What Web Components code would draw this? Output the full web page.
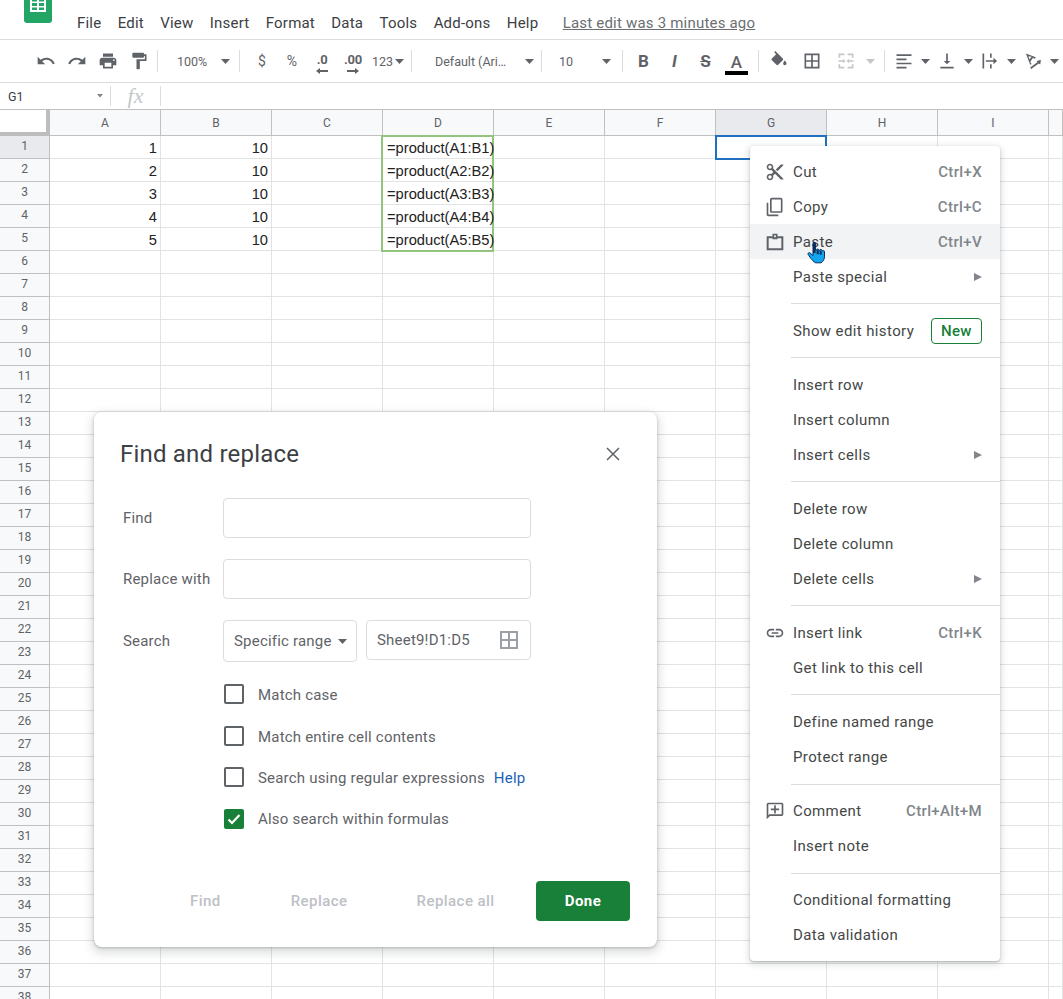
<!DOCTYPE html>
<html>
<head>
<meta charset="utf-8">
<title>Find and replace</title>
<style>
  html, body { margin: 0; padding: 0; background: #fff; }
  body { font-family: Roboto, "Liberation Sans", sans-serif; }
</style>
</head>
<body>

<sheet-app>
  <menu-bar></menu-bar>
  <tool-bar></tool-bar>
  <formula-bar></formula-bar>
  <sheet-grid></sheet-grid>
  <find-dialog></find-dialog>
  <context-menu>
    <menu-item icon="cut" shortcut="Ctrl+X">Cut</menu-item>
    <menu-item icon="copy" shortcut="Ctrl+C">Copy</menu-item>
    <menu-item icon="paste" shortcut="Ctrl+V" hover>Paste</menu-item>
    <menu-item arrow>Paste special</menu-item>
    <menu-sep></menu-sep>
    <menu-item badge="New">Show edit history</menu-item>
    <menu-sep></menu-sep>
    <menu-item>Insert row</menu-item>
    <menu-item>Insert column</menu-item>
    <menu-item arrow>Insert cells</menu-item>
    <menu-sep></menu-sep>
    <menu-item>Delete row</menu-item>
    <menu-item>Delete column</menu-item>
    <menu-item arrow>Delete cells</menu-item>
    <menu-sep></menu-sep>
    <menu-item icon="link" shortcut="Ctrl+K">Insert link</menu-item>
    <menu-item>Get link to this cell</menu-item>
    <menu-sep></menu-sep>
    <menu-item>Define named range</menu-item>
    <menu-item>Protect range</menu-item>
    <menu-sep></menu-sep>
    <menu-item icon="comment" shortcut="Ctrl+Alt+M">Comment</menu-item>
    <menu-item>Insert note</menu-item>
    <menu-sep></menu-sep>
    <menu-item>Conditional formatting</menu-item>
    <menu-item>Data validation</menu-item>
  </context-menu>
</sheet-app>

<script>
// Icon paths, all on a 24 box
const ICONS = {
  undo: '<path d="M12.5 8c-2.65 0-5.05.99-6.9 2.6L2 7v9h9l-3.62-3.62c1.39-1.16 3.16-1.88 5.12-1.88 3.54 0 6.55 2.31 7.6 5.5l2.37-.78C21.08 11.03 17.15 8 12.5 8z"/>',
  redo: '<path d="M18.4 10.6C16.55 8.99 14.15 8 11.5 8c-4.65 0-8.58 3.03-9.96 7.22L3.9 16c1.05-3.19 4.05-5.5 7.6-5.5 1.95 0 3.73.72 5.12 1.88L13 16h9V7l-3.6 3.6z"/>',
  print: '<path d="M19 8H5c-1.66 0-3 1.34-3 3v6h4v4h12v-4h4v-6c0-1.66-1.34-3-3-3zm-3 11H8v-5h8v5zm3-7c-.55 0-1-.45-1-1s.45-1 1-1 1 .45 1 1-.45 1-1 1zm-1-9H6v4h12V3z"/>',
  paint: '<path d="M18 4V3c0-.55-.45-1-1-1H5c-.55 0-1 .45-1 1v4c0 .55.45 1 1 1h12c.55 0 1-.45 1-1V6h1v4H9v11c0 .55.45 1 1 1h2c.55 0 1-.45 1-1v-9h8V4h-3z"/>',
  fill: '<path d="M16.56 8.94L7.62 0 6.21 1.41l2.38 2.38-5.15 5.15c-.59.59-.59 1.54 0 2.12l5.5 5.5c.29.29.68.44 1.06.44s.77-.15 1.06-.44l5.5-5.5c.59-.58.59-1.53 0-2.12zM19 11.5s-2 2.17-2 3.5c0 1.1.9 2 2 2s2-.9 2-2c0-1.33-2-3.5-2-3.5z"/>',
  borders: '<path d="M3 3v18h18V3H3zm8 16H5v-6h6v6zm0-8H5V5h6v6zm8 8h-6v-6h6v6zm0-8h-6V5h6v6z"/>',
  merge: '<path fill="#c4c7ca" d="M3 3h7v2H5v3H3zM14 3h7v5h-2V5h-5zM3 16h2v3h5v2H3zM19 16h2v5h-7v-2h5zM3 11h5.5V9.2l2.8 2.8-2.8 2.8V13H3zM21 11h-5.5V9.2L12.7 12l2.8 2.8V13H21z"/>',
  alignleft: '<path d="M3 4h18v2H3zM3 9h12v2H3zM3 14h18v2H3zM3 19h12v2H3z"/>',
  valign: '<path d="M16 12h-3V3h-2v9H8l4 4 4-4zM4 19v2h16v-2H4z"/>',
  wrap: '<path d="M3 3h2v18H3zM12 3h2v5h-2zM12 16h2v5h-2zM7 11h9.2V8l4.3 4-4.3 4v-3H7z"/>',
  rotate: '<path d="M3.5 3l11.8 4.5-1 1.8-2.6-1-3 5 1.6 2.2-1.7 1L3.5 3zM6.5 6.3l1.3 3.9 2.5-3.2-3.8-.7zM21.5 10.5l-.8 5.7-1.8-1.1L9.8 21.5l-1.2-1.7 9-6.5-1.6-1 5.5-1.8z"/>',
  cut: '<path d="M9.64 7.64c.23-.5.36-1.05.36-1.64 0-2.21-1.79-4-4-4S2 3.79 2 6s1.79 4 4 4c.59 0 1.14-.13 1.64-.36L10 12l-2.36 2.36C7.14 14.13 6.59 14 6 14c-2.21 0-4 1.79-4 4s1.79 4 4 4 4-1.79 4-4c0-.59-.13-1.14-.36-1.64L12 14l7 7h3v-1L9.64 7.64zM6 8c-1.1 0-2-.89-2-2s.9-2 2-2 2 .89 2 2-.9 2-2 2zm0 12c-1.1 0-2-.89-2-2s.9-2 2-2 2 .89 2 2-.9 2-2 2zM19 3l-6 6 2 2 7-7V3z"/>',
  copy: '<path d="M16 1H4c-1.1 0-2 .9-2 2v14h2V3h12V1zm3 4H8c-1.1 0-2 .9-2 2v14c0 1.1.9 2 2 2h11c1.1 0 2-.9 2-2V7c0-1.1-.9-2-2-2zm0 16H8V7h11v14z" transform="matrix(1 0 0 -1 0 24)"/>',
  paste: '<path d="M2 5h7V2h6v3h7v17H2V5zm2.4 2.4v12.2h15.2V7.4H15v1.4H9V7.4H4.4zM11 4v2.4h2V4h-2z"/>',
  link: '<path d="M3.9 12c0-1.71 1.39-3.1 3.1-3.1h4V7H7c-2.76 0-5 2.24-5 5s2.24 5 5 5h4v-1.9H7c-1.71 0-3.1-1.39-3.1-3.1zM8 13h8v-2H8v2zm9-6h-4v1.9h4c1.71 0 3.1 1.39 3.1 3.1s-1.39 3.1-3.1 3.1h-4V17h4c2.76 0 5-2.24 5-5s-2.24-5-5-5z"/>',
  comment: '<path transform="matrix(-1 0 0 1 24 0)" d="M22 4c0-1.1-.9-2-2-2H4c-1.1 0-2 .9-2 2v12c0 1.1.9 2 2 2h14l4 4V4zm-2 13.17L18.83 16H4V4h16v13.17zM13 5h-2v4H7v2h4v4h2v-4h4V9h-4z"/>'
};

function icon(name, size, color) {
  return `<svg width="${size}" height="${size}" viewBox="0 0 24 24" fill="${color || '#5f6368'}">${ICONS[name]}</svg>`;
}

const caret = (color, w) => `<svg width="${w || 9}" height="${(w || 9) / 2 + .5}" viewBox="0 0 9 5"><path d="M0 0h9L4.5 5z" fill="${color || '#5f6368'}"/></svg>`;

// Whole page frame
class SheetApp extends HTMLElement {
  constructor() {
    super();
    this.attachShadow({ mode: 'open' });
    this.shadowRoot.innerHTML = `
      <style>
        :host { display: flex; flex-direction: column; position: relative; width: 1063px; height: 999px; overflow: hidden; background: #fff; }
      </style>
      <slot></slot>`;
  }
}

class MenuBar extends HTMLElement {
  constructor() {
    super();
    this.attachShadow({ mode: 'open' });
    const items = ['File', 'Edit', 'View', 'Insert', 'Format', 'Data', 'Tools', 'Add-ons', 'Help'];
    this.shadowRoot.innerHTML = `
      <style>
        :host { display: flex; flex: none; height: 39px; border-bottom: 1px solid #dadce0; font: 15px Roboto, sans-serif; letter-spacing: .2px; color: #3c4043; overflow: hidden; }
        .logo { flex: none; margin: -17px 25px 0 24px; width: 28px; height: 40px; }
        nav { display: flex; gap: 16.35px; padding-top: 14px; }
        a { text-decoration: underline; color: #6b6f73; margin-left: 8px; }
      </style>
      <svg class="logo" viewBox="0 0 28 40">
        <path d="M0 0h28v37a3 3 0 0 1-3 3H3a3 3 0 0 1-3-3z" fill="#23a566"/>
        <path d="M6 16h16v13H6z" fill="#fff"/>
        <path d="M8 18.5h5v-2H8zM15 18.5h5v-2h-5zM8 23h5v-3H8zM15 23h5v-3h-5zM8 27h5v-2.5H8zM15 27h5v-2.5h-5z" fill="#23a566"/>
      </svg>
      <nav>${items.map(i => `<span>${i}</span>`).join('')}<a>Last edit was 3 minutes ago</a></nav>`;
  }
}

// One toolbar slot with a fixed width; holds an icon or a short text, maybe a caret
class ToolBtn extends HTMLElement {
  constructor() {
    super();
    this.attachShadow({ mode: 'open' });
  }
  connectedCallback() {
    const w = this.getAttribute('w');
    const name = this.getAttribute('icon');
    const gap = this.getAttribute('gap');
    const hasCaret = this.hasAttribute('caret');
    const size = this.getAttribute('size') || 18;
    this.shadowRoot.innerHTML = `
      <style>
        :host { display: flex; flex: none; align-items: center; justify-content: ${this.getAttribute('align') || 'center'}; width: ${w}px; height: 100%; box-sizing: border-box; padding-left: ${this.getAttribute('pl') || 0}px; color: #5f6368; font: 12.5px Roboto, sans-serif; gap: ${gap || 0}px; white-space: nowrap; }
        .caret { display: flex; }
      </style>
      ${name ? icon(name, size) : ''}<slot></slot>${hasCaret ? `<span class="caret">${caret(this.getAttribute('caret-color'))}</span>` : ''}`;
  }
}

class ToolSep extends HTMLElement {
  constructor() {
    super();
    this.attachShadow({ mode: 'open' });
    this.shadowRoot.innerHTML = `
      <style>
        :host { display: flex; flex: none; align-items: center; justify-content: center; height: 100%; }
        i { display: block; width: 1px; height: 22px; background: #dadce0; }
      </style><i></i>`;
  }
  connectedCallback() {
    this.style.width = this.getAttribute('w') + 'px';
  }
}

class ToolBar extends HTMLElement {
  constructor() {
    super();
    this.attachShadow({ mode: 'open' });
    this.shadowRoot.innerHTML = `
      <style>
        :host { display: flex; flex: none; height: 42px; padding-left: 31px; border-bottom: 1px solid #dadce0; overflow: hidden; }
        .b { font: 700 17px Roboto, sans-serif; }
        .i { font: italic 700 17px Roboto, sans-serif; }
        .s { font: 700 17px Roboto, sans-serif; text-decoration: line-through; }
        .a { display: flex; flex-direction: column; align-items: center; padding-top: 6px; font: 500 17px/16px Roboto, sans-serif; }
        .a u { display: block; width: 23px; height: 4px; background: #000; margin-top: 1px; }
        .dec { display: flex; flex-direction: column; align-items: center; padding-top: 6px; font: 700 13px/12px Roboto, sans-serif; letter-spacing: -.3px; }
        .dec svg { display: block; margin-top: 2px; }
        .sym { font-size: 14px; }
      </style>
      <tool-btn w="30" icon="undo" size="20"></tool-btn>
      <tool-btn w="31" icon="redo" size="20"></tool-btn>
      <tool-btn w="31" icon="print" size="20"></tool-btn>
      <tool-btn w="32" icon="paint" size="20"></tool-btn>
      <tool-sep w="4"></tool-sep>
      <tool-btn w="79" align="flex-start" pl="18" gap="14" caret>100%</tool-btn>
      <tool-sep w="2"></tool-sep>
      <tool-btn w="7"></tool-btn>
      <tool-btn w="30"><span class="sym">$</span></tool-btn>
      <tool-btn w="30"><span class="sym">%</span></tool-btn>
      <tool-btn w="30"><span class="dec">.0<svg width="12" height="6" viewBox="0 0 12 6"><path d="M0 3l4-3v2h8v2H4v2z" fill="#5f6368"/></svg></span></tool-btn>
      <tool-btn w="32"><span class="dec">.00<svg width="12" height="6" viewBox="0 0 12 6"><path d="M12 3L8 0v2H0v2h8v2z" fill="#5f6368"/></svg></span></tool-btn>
      <tool-btn w="40" align="flex-start" pl="3" gap="2" caret>123</tool-btn>
      <tool-sep w="4"></tool-sep>
      <tool-btn w="127" align="flex-start" pl="22" gap="19" caret>Default (Ari…</tool-btn>
      <tool-sep w="2"></tool-sep>
      <tool-btn w="79" align="flex-start" pl="17" gap="29" caret>10</tool-btn>
      <tool-sep w="2"></tool-sep>
      <tool-btn w="5"></tool-btn>
      <tool-btn w="31"><span class="b">B</span></tool-btn>
      <tool-btn w="31"><span class="i">I</span></tool-btn>
      <tool-btn w="31"><span class="s">S</span></tool-btn>
      <tool-btn w="31"><span class="a">A<u></u></span></tool-btn>
      <tool-sep w="12"></tool-sep>
      <tool-btn w="30" icon="fill" size="20"></tool-btn>
      <tool-btn w="36" icon="borders" size="20"></tool-btn>
      <tool-btn w="32" icon="merge" size="20"></tool-btn>
      <tool-btn w="16" caret caret-color="#c4c7ca"></tool-btn>
      <tool-sep w="12"></tool-sep>
      <tool-btn w="28" icon="alignleft" size="20"></tool-btn>
      <tool-btn w="15" caret></tool-btn>
      <tool-btn w="28" icon="valign" size="20"></tool-btn>
      <tool-btn w="15" caret></tool-btn>
      <tool-btn w="28" icon="wrap" size="20"></tool-btn>
      <tool-btn w="15" caret></tool-btn>
      <tool-btn w="28" icon="rotate" size="20"></tool-btn>
      <tool-btn w="15" caret></tool-btn>`;
  }
}

class FormulaBar extends HTMLElement {
  constructor() {
    super();
    this.attachShadow({ mode: 'open' });
    this.shadowRoot.innerHTML = `
      <style>
        :host { display: flex; flex: none; align-items: center; height: 26px; border-bottom: 1px solid #c0c0c0; font: 12.5px Roboto, sans-serif; color: #3c4043; }
        .name { display: flex; align-items: center; justify-content: space-between; width: 110px; padding: 0 7px 0 8px; box-sizing: border-box; height: 22px; }
        .line { width: 1px; height: 20px; background: #dadce0; }
        .fx { width: 49px; text-align: center; font: italic 22px "Liberation Serif", serif; color: #c4c7ca; }
      </style>
      <div class="name"><span>G1</span>${caret('#80868b', 6)}</div>
      <div class="line"></div>
      <div class="fx">fx</div>
      <div class="line"></div>`;
  }
}

// Column and row headers, cells, and the two selection boxes laid on the same grid
class SheetGrid extends HTMLElement {
  constructor() {
    super();
    this.attachShadow({ mode: 'open' });
  }
  connectedCallback() {
    const cols = 'ABCDEFGHI'.split('');
    const at = (r, c) => `style="grid-row:${r};grid-column:${c}"`;
    let html = `<div class="corner" ${at(1, 1)}></div>`;
    cols.forEach((c, i) => {
      html += `<div class="head ${c === 'G' ? 'on' : ''}" ${at(1, i + 2)}>${c}</div>`;
    });
    html += `<div class="head" ${at(1, 11)}></div>`;
    for (let r = 1; r <= 38; r++) {
      html += `<div class="rowh ${r === 1 ? 'on' : ''}" ${at(r + 1, 1)}>${r}</div>`;
      cols.forEach((c, i) => {
        let text = '';
        let cls = 'cell';
        if (r <= 5) {
          if (c === 'A') { text = r; cls += ' num'; }
          if (c === 'B') { text = 10; cls += ' num'; }
          if (c === 'D') { text = `=product(A${r}:B${r})`; cls += ' formula'; }
        }
        html += `<div class="${cls}" ${at(r + 1, i + 2)}>${text}</div>`;
      });
      html += `<div class="cell" ${at(r + 1, 11)}></div>`;
    }
    this.shadowRoot.innerHTML = `
      <style>
        :host { display: grid; flex: none; grid-template-columns: 50px repeat(9, 111px) 14px; grid-template-rows: 26px repeat(38, 23px); width: 1063px; box-sizing: border-box; font: 12px Roboto, sans-serif; color: #5f6368; }
        div { box-sizing: border-box; }
        .corner { background: #fff; border-right: 4px solid #bdbdbd; border-bottom: 4px solid #bdbdbd; }
        .head { display: flex; align-items: center; justify-content: center; background: #f8f9fa; border-right: 1px solid #c0c0c0; border-bottom: 1px solid #c0c0c0; padding-top: 1px; }
        .rowh { display: flex; align-items: center; justify-content: center; background: #f8f9fa; border-right: 1px solid #c0c0c0; border-bottom: 1px solid #c0c0c0; padding-bottom: 2px; }
        .on { background: #e8eaed; }
        .cell { border-right: 1px solid #e2e3e3; border-bottom: 1px solid #e2e3e3; font: 14.7px/23px "Liberation Sans", sans-serif; color: #222; padding: 1px 0 0 4px; white-space: nowrap; }
        .num { text-align: right; padding: 1px 3px 0 0; }
        .formula { z-index: 2; border-color: transparent; }
        .green { grid-row: 2 / 7; grid-column: 5; border: 2px solid #93c47d; margin: -1px 0 -1px -2px; z-index: 1; }
        .blue { grid-row: 2; grid-column: 8; border: 2px solid #1f70c1; margin: -1px 0 -1px -1px; z-index: 1; }
        .rule { grid-column: 5; border-bottom: 1px solid #e2e3e3; }
      </style>
      ${html}
      <div class="rule" style="grid-row:2"></div>
      <div class="rule" style="grid-row:3"></div>
      <div class="rule" style="grid-row:4"></div>
      <div class="rule" style="grid-row:5"></div>
      <div class="green"></div>
      <div class="blue"></div>`;
  }
}

class MenuSep extends HTMLElement {
  constructor() {
    super();
    this.attachShadow({ mode: 'open' });
    this.shadowRoot.innerHTML = `
      <style>
        :host { display: block; padding: 9.05px 0 9.05px 41px; }
        i { display: block; height: 1px; background: #dadce0; }
      </style><i></i>`;
  }
}

class MenuItem extends HTMLElement {
  constructor() {
    super();
    this.attachShadow({ mode: 'open' });
  }
  connectedCallback() {
    const name = this.getAttribute('icon');
    const shortcut = this.getAttribute('shortcut');
    const badge = this.getAttribute('badge');
    this.shadowRoot.innerHTML = `
      <style>
        :host { display: flex; align-items: center; height: 35px; padding: 0 18px 0 13px; font: 15px Roboto, sans-serif; letter-spacing: .38px; color: #444746; background: ${this.hasAttribute('hover') ? '#f1f3f4' : 'transparent'}; }
        .ic { display: flex; justify-content: center; width: 24px; margin-right: 6px; }
        .label { flex: 1; }
        .key { color: #80868b; font-weight: 500; letter-spacing: .35px; }
        .arrow { width: 0; height: 0; border-left: 8px solid #80868b; border-top: 4px solid transparent; border-bottom: 4px solid transparent; }
        .badge { border: 1px solid #188038; border-radius: 4px; color: #188038; font-weight: 500; padding: 4px 9.5px 3px; line-height: 17px; letter-spacing: .2px; }
      </style>
      <span class="ic">${name ? icon(name, 20) : ''}</span>
      <span class="label"><slot></slot></span>
      ${shortcut ? `<span class="key">${shortcut}</span>` : ''}
      ${this.hasAttribute('arrow') ? '<span class="arrow"></span>' : ''}
      ${badge ? `<span class="badge">${badge}</span>` : ''}`;
  }
}

class ContextMenu extends HTMLElement {
  constructor() {
    super();
    this.attachShadow({ mode: 'open' });
    this.shadowRoot.innerHTML = `
      <style>
        :host { display: block; position: absolute; left: 750px; top: 146px; width: 250px; height: 815px; box-sizing: border-box; padding-top: 8px; background: #fff; border-radius: 4px; box-shadow: 0 2px 6px 2px rgba(60,64,67,.15), 0 1px 2px rgba(60,64,67,.3); z-index: 5; }
        .hand { position: absolute; left: 57px; top: 95px; }
      </style>
      <slot></slot>
      <svg class="hand" width="18" height="24" viewBox="0 0 18 24">
        <path d="M6 2.5c0-1.6 2.6-1.6 2.6 0V9l1 .1c0-1.4 2.2-1.4 2.2 0l.9.2c.1-1.2 2.1-1.2 2.2.1l.9.5c.5-.7 1.7-.3 1.7.7v5.2c0 2.5-1.4 4.8-3.5 6H8.7C6.6 21.3 3 16.5 1.2 13.5c-.8-1.3.8-2.5 2-1.4L6 14.5z" fill="#12a5f0" stroke="#0b2c5c" stroke-width="1"/>
        <path d="M6 2.5c0-1.6 2.6-1.6 2.6 0V12H6zM9.7 9.3h2v4h-2zM12.7 9.7h2v4h-2z" fill="#0b2c5c"/>
      </svg>`;
  }
}

class CheckRow extends HTMLElement {
  constructor() {
    super();
    this.attachShadow({ mode: 'open' });
    this.shadowRoot.innerHTML = `
      <style>
        :host { display: flex; align-items: center; gap: 14px; height: 22px; font: 15px Roboto, sans-serif; letter-spacing: .2px; color: #5f6368; }
        .box { flex: none; width: 20px; height: 20px; box-sizing: border-box; border: 2px solid #5f6368; border-radius: 2px; display: flex; align-items: center; justify-content: center; }
        .text { padding-top: 2px; }
        :host([checked]) .box { background: #188038; border-color: #188038; }
        :host([checked]) .text { padding-top: 0; }
        svg { display: none; }
        :host([checked]) svg { display: block; }
      </style>
      <span class="box"><svg width="16" height="16" viewBox="0 0 16 16"><path d="M2.5 8.5l3.5 3.5 7.5-8" fill="none" stroke="#fff" stroke-width="2.2"/></svg></span>
      <span class="text"><slot></slot></span>`;
  }
}

class FindDialog extends HTMLElement {
  constructor() {
    super();
    this.attachShadow({ mode: 'open' });
    this.shadowRoot.innerHTML = `
      <style>
        :host { display: flex; flex-direction: column; position: absolute; left: 94px; top: 412px; width: 563px; height: 535px; box-sizing: border-box; padding: 27px 27px 26px 26px; background: #fff; border-radius: 8px; box-shadow: 0 4px 8px 3px rgba(60,64,67,.15), 0 1px 3px rgba(60,64,67,.3); font: 15px Roboto, sans-serif; letter-spacing: .2px; color: #5f6368; z-index: 4; }
        header { display: flex; align-items: center; justify-content: space-between; height: 30px; }
        h1 { margin: 0; font: 400 24px Roboto, sans-serif; letter-spacing: .2px; color: #3c4043; }
        .x { margin-right: 9px; }
        .form { display: grid; grid-template-columns: 100px 308px; row-gap: 21px; margin-top: 29px; padding-left: 3px; align-items: center; }
        .field { height: 40px; border: 1px solid #dadce0; border-radius: 4px; box-sizing: border-box; }
        .range { display: flex; gap: 9px; }
        .select { display: flex; align-items: center; gap: 6px; width: 134px; height: 42px; padding-left: 10px; box-sizing: border-box; border: 1px solid #dadce0; border-radius: 4px; }
        .sheetref { display: flex; align-items: center; justify-content: space-between; flex: 1; height: 40px; padding: 0 9px 0 10px; box-sizing: border-box; border: 1px solid #dadce0; border-radius: 4px; }
        .checks { display: flex; flex-direction: column; gap: 19.5px; margin: 21px 0 0 104px; }
        .help { color: #1a62b8; margin-left: 5px; }
        footer { display: flex; align-items: center; margin-top: auto; height: 40px; color: #bdc1c6; font-weight: 500; letter-spacing: .45px; }
        .done { margin-left: auto; width: 94px; height: 40px; display: flex; align-items: center; justify-content: center; background: #188038; color: #fff; border-radius: 4px; font-weight: 700; letter-spacing: .4px; }
      </style>
      <header>
        <h1>Find and replace</h1>
        <svg class="x" width="16" height="16" viewBox="0 0 16 16"><path d="M2 2l12 12M14 2L2 14" stroke="#5f6368" stroke-width="1.5"/></svg>
      </header>
      <div class="form">
        <span>Find</span><div class="field"></div>
        <span>Replace with</span><div class="field"></div>
        <span>Search</span>
        <div class="range">
          <div class="select"><span>Specific range</span>${caret()}</div>
          <div class="sheetref"><span>Sheet9!D1:D5</span>${icon('borders', 24, '#9aa0a6')}</div>
        </div>
      </div>
      <div class="checks">
        <check-row>Match case</check-row>
        <check-row>Match entire cell contents</check-row>
        <check-row>Search using regular expressions <span class="help">Help</span></check-row>
        <check-row checked>Also search within formulas</check-row>
      </div>
      <footer>
        <span style="margin-left:70px">Find</span>
        <span style="margin-left:70px">Replace</span>
        <span style="margin-left:69px">Replace all</span>
        <div class="done">Done</div>
      </footer>`;
  }
}

customElements.define('sheet-app', SheetApp);
customElements.define('menu-bar', MenuBar);
customElements.define('tool-btn', ToolBtn);
customElements.define('tool-sep', ToolSep);
customElements.define('tool-bar', ToolBar);
customElements.define('formula-bar', FormulaBar);
customElements.define('sheet-grid', SheetGrid);
customElements.define('menu-sep', MenuSep);
customElements.define('menu-item', MenuItem);
customElements.define('context-menu', ContextMenu);
customElements.define('check-row', CheckRow);
customElements.define('find-dialog', FindDialog);
</script>
</body>
</html>
